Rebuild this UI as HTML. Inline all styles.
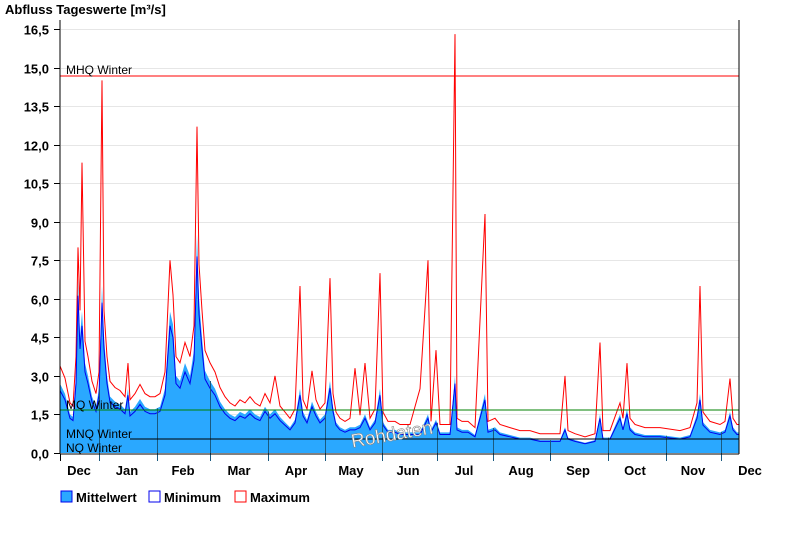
<!DOCTYPE html>
<html><head><meta charset="utf-8"><style>
body{margin:0;background:#fff;width:800px;height:550px;overflow:hidden;font-family:"Liberation Sans",Arial,sans-serif}
</style></head><body>
<svg id="s" width="800" height="550" xmlns="http://www.w3.org/2000/svg" font-family="Liberation Sans, Arial, sans-serif">
<text x="5" y="14" font-size="13" font-weight="bold">Abfluss Tageswerte [m³/s]</text>
<g id="grid" stroke="#e6e6e6" stroke-width="1"></g>
<path id="mean" fill="#2aa8ff" stroke="none"/>
<polyline id="mx" fill="none" stroke="#ff0000" stroke-width="1"/>
<polyline id="mn" fill="none" stroke="#0000ee" stroke-width="1"/>
<g id="mt" stroke="#1a5a80" stroke-width="1"></g>
<line x1="60" y1="76" x2="739" y2="76" stroke="#ff0000"/>
<text x="66" y="74" font-size="12">MHQ Winter</text>
<line x1="60" y1="410" x2="739" y2="410" stroke="#008000"/>
<text x="66" y="409" font-size="12">MQ Winter</text>
<line x1="130" y1="439" x2="739" y2="439" stroke="#000"/>
<text x="66" y="438" font-size="12">MNQ Winter</text>
<text x="66" y="452" font-size="12">NQ Winter</text>
<text x="350" y="440" font-size="19" fill="#fff" stroke="#888" stroke-width="0.6" transform="rotate(-10 395 430)">Rohdaten</text>
<line x1="60" y1="20" x2="60" y2="454" stroke="#000"/>
<line x1="739" y1="20" x2="739" y2="454" stroke="#000"/>
<line x1="60" y1="454" x2="739" y2="454" stroke="#000"/>
<g id="yl" font-size="13" font-weight="bold" text-anchor="end"></g>
<g id="xl" font-size="13" font-weight="bold" text-anchor="middle"></g>
<rect x="61" y="491" width="11" height="11" fill="#2aa8ff" stroke="#0000ee"/>
<text x="76" y="502" font-size="13" font-weight="bold">Mittelwert</text>
<rect x="149" y="491" width="11" height="11" fill="#fff" stroke="#0000ee"/>
<text x="164" y="502" font-size="13" font-weight="bold">Minimum</text>
<rect x="235" y="491" width="11" height="11" fill="#fff" stroke="#ff0000"/>
<text x="250" y="502" font-size="13" font-weight="bold">Maximum</text>
</svg>
<script>
var Y=v=>453-v*25.7,ns="http://www.w3.org/2000/svg";
function el(p,t,a,txt){var e=document.createElementNS(ns,t);for(var k in a)e.setAttribute(k,a[k]);if(txt)e.textContent=txt;document.getElementById(p).appendChild(e);}
var lab=["16,5","15,0","13,5","12,0","10,5","9,0","7,5","6,0","4,5","3,0","1,5","0,0"];
for(var i=0;i<12;i++){var v=16.5-1.5*i,y=Math.round(Y(v))+0.5;if(i<11)el("grid","line",{x1:61,y1:y,x2:739,y2:y});el("yl","line",{x1:54,y1:y,x2:60,y2:y,stroke:"#000"});el("yl","text",{x:49,y:y+5},lab[i]);}
var d=[[60,2.7],[65,2.3],[70,1.5],[73,1.4],[76,3],[78,6.8],[80,4.5],[82,5.5],[85,3.5],[88,3],[92,2.2],[96,1.8],[99,2.5],[102,6.5],[104,4.5],[107,3],[110,2.2],[115,2],[120,1.9],[125,1.7],[128,2.5],[130,1.6],[135,1.8],[140,2.1],[145,1.8],[150,1.7],[155,1.7],[160,1.8],[165,2.5],[170,5.5],[173,5],[176,3],[180,2.8],[185,3.5],[190,3],[194,4],[197,8.5],[199,6],[202,4.5],[205,3.2],[210,2.8],[215,2.5],[220,2],[225,1.7],[230,1.5],[235,1.4],[240,1.6],[245,1.5],[250,1.7],[255,1.5],[260,1.4],[265,1.8],[270,1.5],[275,1.7],[280,1.4],[285,1.2],[290,1.0],[295,1.3],[300,2.5],[303,1.6],[307,1.3],[312,2.0],[316,1.6],[320,1.3],[325,1.5],[330,2.8],[333,1.8],[336,1.2],[340,1.0],[345,0.9],[350,1.0],[355,1.0],[360,1.1],[365,1.5],[370,1.0],[375,1.3],[380,2.5],[383,1.2],[388,0.9],[395,0.9],[400,0.8],[410,0.8],[420,0.8],[428,1.5],[431,0.9],[436,1.3],[440,0.8],[450,0.8],[455,3.0],[457,1.0],[462,0.9],[468,0.9],[475,0.7],[485,2.3],[488,0.9],[495,1.0],[500,0.8],[510,0.7],[520,0.6],[530,0.6],[540,0.5],[550,0.5],[560,0.5],[565,1.0],[568,0.6],[575,0.5],[585,0.4],[595,0.5],[600,1.5],[603,0.6],[610,0.6],[620,1.5],[623,1.0],[627,1.7],[630,1.0],[635,0.8],[645,0.7],[660,0.7],[680,0.6],[690,0.7],[697,1.5],[700,2.3],[703,1.2],[710,0.9],[720,0.8],[725,0.9],[730,1.6],[733,1.0],[737,0.8],[739,0.8]];
function at(x){for(var i=1;i<d.length;i++)if(d[i][0]>=x){var a=d[i-1],b=d[i];return a[1]+(b[1]-a[1])*(x-a[0])/(b[0]-a[0]);}return 0.8;}
var ticks=[99,157,210,268,325,382,437,493,550,608,666,721];
ticks.forEach(x=>{el("mt","line",{x1:x+.5,y1:Y(at(x)),x2:x+.5,y2:461});});
el("mt","line",{x1:60.5,y1:454,x2:60.5,y2:461,stroke:"#000"});
var ml=[["Dec",79],["Jan",127],["Feb",183],["Mar",239],["Apr",296],["May",351],["Jun",408],["Jul",464],["Aug",521],["Sep",578],["Oct",635],["Nov",693],["Dec",750]];
ml.forEach(m=>el("xl","text",{x:m[1],y:475},m[0]));
var sp={82:11.3,78:8,102:14.5,197:12.7,170:7.5,300:6.5,330:6.8,380:7,428:7.5,455:16.3,485:9.3,600:4.3,627:3.5,700:6.5,730:2.9,365:3.5,436:4,565:3,128:3.5,185:4.3,275:3,312:3.2,355:3.3,420:2.5};
var p="M60,453 ",mx=[],mn=[];
d.forEach(q=>{p+="L"+q[0]+","+Y(q[1]).toFixed(1)+" ";var m=sp[q[0]]||q[1]*1.2+0.15;mx.push(q[0]+","+Y(m).toFixed(1));mn.push(q[0]+","+Y(q[1]*0.9).toFixed(1));});
p+="L739,453Z";
document.getElementById("mean").setAttribute("d",p);
document.getElementById("mx").setAttribute("points",mx.join(" "));
document.getElementById("mn").setAttribute("points",mn.join(" "));
</script>
</body></html>
